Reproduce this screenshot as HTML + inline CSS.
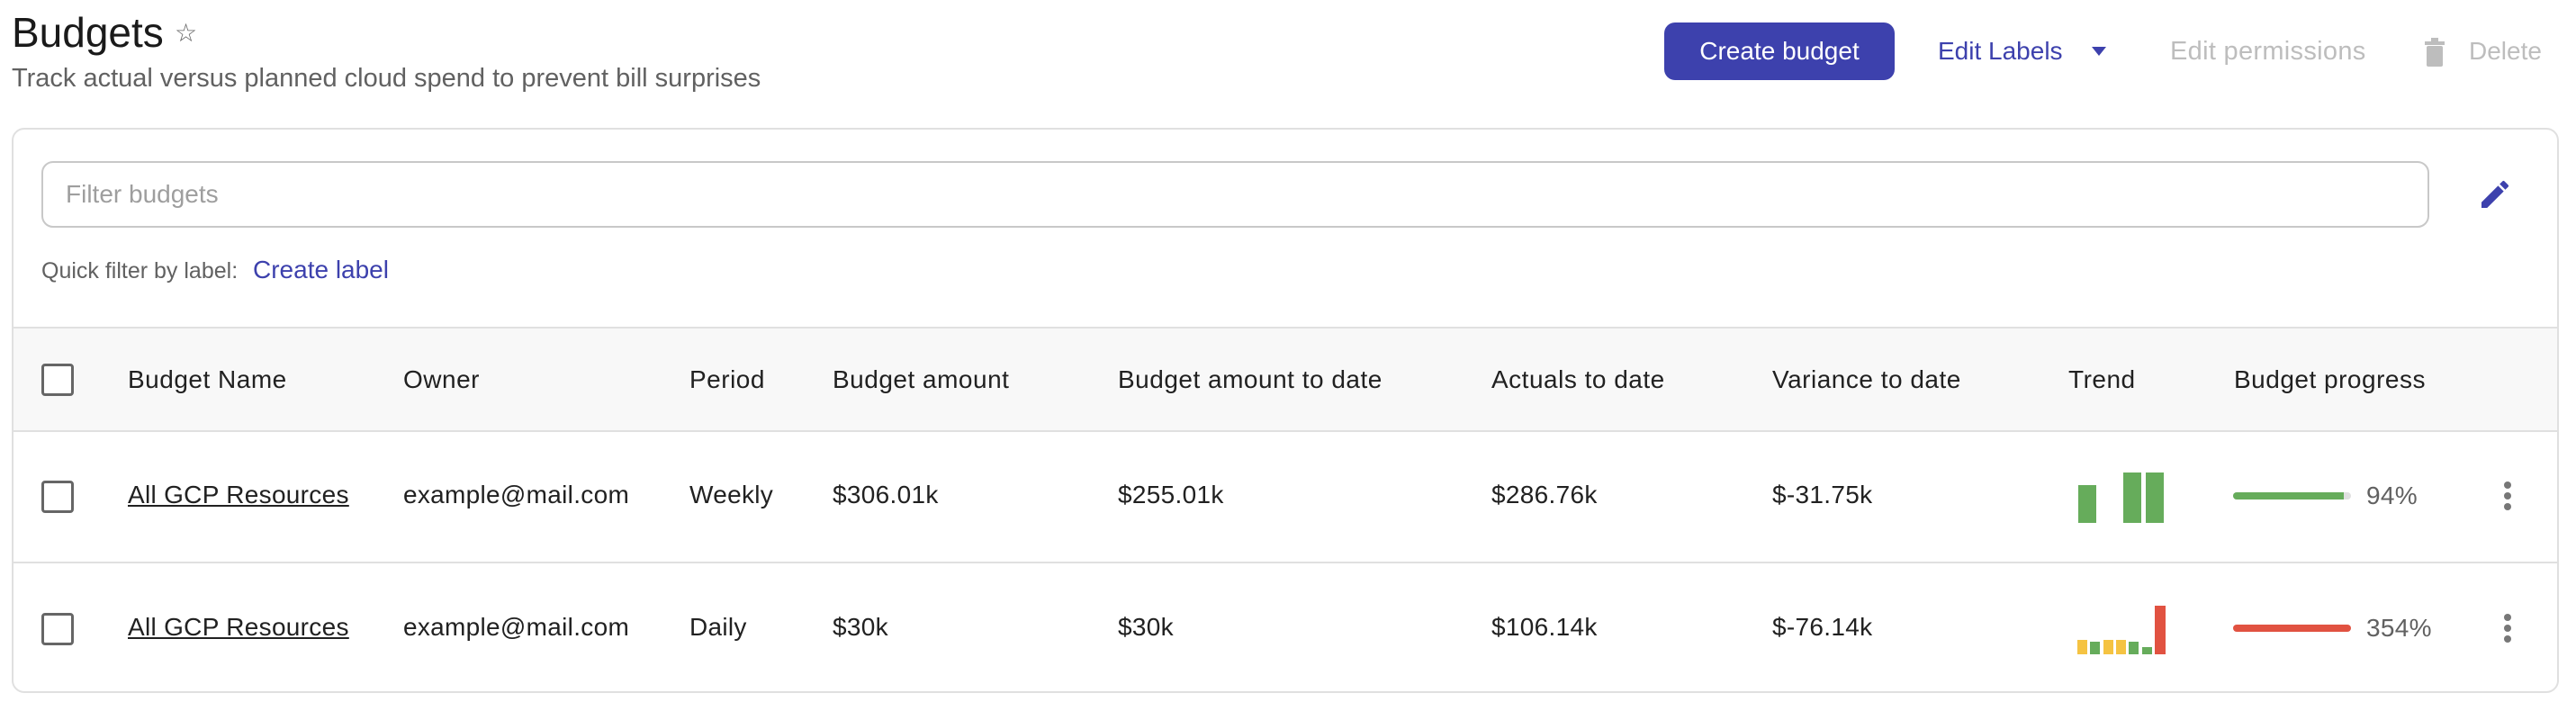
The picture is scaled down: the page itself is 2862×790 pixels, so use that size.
<!DOCTYPE html>
<html><head><meta charset="utf-8"><style>
*{margin:0;padding:0;box-sizing:border-box}
body{width:2862px;height:790px;background:#fff;font-family:"Liberation Sans",sans-serif;color:#212121;position:relative;overflow:hidden}
.a{position:absolute;white-space:nowrap}
.t{font-size:28px;line-height:32px;letter-spacing:0.3px}
.h{font-size:28px;line-height:32px;font-weight:500;color:#212121;letter-spacing:0.5px}
.cb{position:absolute;left:46px;width:36px;height:36px;border:3.5px solid #666;border-radius:4px;background:#fff}
.bar{position:absolute}
.g{background:#66ac5b}.y{background:#f5c342}.r{background:#e15241}
.dot{position:absolute;width:8px;height:8px;border-radius:50%;background:#777}
</style></head><body>
<div class="a" style="left:13px;top:9px;font-size:46px;line-height:54px;color:#1a1a1a">Budgets</div>
<div class="a" style="left:194px;top:20px;font-size:28px;color:#666">☆</div>
<div class="a" style="left:13px;top:70px;font-size:29px;line-height:34px;color:#616161">Track actual versus planned cloud spend to prevent bill surprises</div>

<div class="a" style="left:1849px;top:25px;width:256px;height:64px;background:#3d41ad;border-radius:12px;color:#fff;font-size:28px;line-height:64px;text-align:center;font-weight:500">Create budget</div>
<div class="a" style="left:2153px;top:40px;font-size:28px;line-height:34px;color:#3d41ad;font-weight:500">Edit Labels</div>
<svg class="a" style="left:2324px;top:52px" width="16" height="12"><path d="M0 0H16L8 10Z" fill="#3d41ad"/></svg>
<div class="a" style="left:2411px;top:40px;font-size:29px;line-height:34px;color:#bdbdbd;font-weight:500;letter-spacing:0.3px">Edit permissions</div>
<svg class="a" style="left:2694px;top:42px" width="22" height="32"><rect x="0" y="4" width="22" height="4" fill="#bdbdbd"/><rect x="7" y="0" width="8" height="5" fill="#bdbdbd"/><rect x="2" y="9" width="18" height="23" rx="2" fill="#bdbdbd"/></svg>
<div class="a" style="left:2743px;top:40px;font-size:28px;line-height:34px;color:#bdbdbd;font-weight:500">Delete</div>

<div class="a" style="left:13px;top:142px;width:2830px;height:628px;border:2px solid #e0e0e0;border-radius:14px;overflow:hidden">
  <div class="a" style="left:0;top:219px;width:2830px;height:117px;background:#f8f8f8;border-top:2px solid #e0e0e0;border-bottom:2px solid #e0e0e0"></div>
  <div class="a" style="left:0;top:480px;width:2830px;height:2px;background:#e0e0e0"></div>
</div>
<div class="a" style="left:46px;top:179px;width:2653px;height:74px;border:2px solid #c8c8c8;border-radius:13px"></div>
<div class="a" style="left:73px;top:200px;font-size:28px;line-height:32px;color:#9e9e9e">Filter budgets</div>
<svg class="a" style="left:2752px;top:196px" width="40" height="40" viewBox="0 0 24 24"><path d="M3 17.25V21h3.75L17.81 9.94l-3.75-3.75L3 17.25zM20.71 7.04a1 1 0 000-1.41l-2.34-2.34a1 1 0 00-1.41 0l-1.83 1.83 3.75 3.75 1.83-1.83z" fill="#3d41ad"/></svg>
<div class="a" style="left:46px;top:286px;font-size:25px;line-height:30px;color:#616161">Quick filter by label:</div>
<div class="a" style="left:281px;top:284px;font-size:28px;line-height:32px;color:#3d41ad;font-weight:500">Create label</div>

<div class="cb" style="top:404px"></div>
<div class="a h" style="left:142px;top:406px">Budget Name</div>
<div class="a h" style="left:448px;top:406px">Owner</div>
<div class="a h" style="left:766px;top:406px">Period</div>
<div class="a h" style="left:925px;top:406px">Budget amount</div>
<div class="a h" style="left:1242px;top:406px">Budget amount to date</div>
<div class="a h" style="left:1657px;top:406px">Actuals to date</div>
<div class="a h" style="left:1969px;top:406px">Variance to date</div>
<div class="a h" style="left:2298px;top:406px">Trend</div>
<div class="a h" style="left:2482px;top:406px">Budget progress</div>

<div class="cb" style="top:534px"></div>
<div class="a t" style="left:142px;top:534px;text-decoration:underline">All GCP Resources</div>
<div class="a t" style="left:448px;top:534px">example@mail.com</div>
<div class="a t" style="left:766px;top:534px">Weekly</div>
<div class="a t" style="left:925px;top:534px">$306.01k</div>
<div class="a t" style="left:1242px;top:534px">$255.01k</div>
<div class="a t" style="left:1657px;top:534px">$286.76k</div>
<div class="a t" style="left:1969px;top:534px">$-31.75k</div>
<div class="bar g" style="left:2309px;top:539px;width:20px;height:42px"></div>
<div class="bar g" style="left:2359px;top:525px;width:20px;height:56px"></div>
<div class="bar g" style="left:2384px;top:525px;width:20px;height:56px"></div>
<div class="a" style="left:2481px;top:547px;width:131px;height:8px;border-radius:4px;background:#e0e0e0"></div>
<div class="a" style="left:2481px;top:547px;width:123px;height:8px;border-radius:4px 0 0 4px;background:#66ac5b"></div>
<div class="a t" style="left:2629px;top:535px;color:#616161">94%</div>
<div class="dot" style="left:2782px;top:535px"></div><div class="dot" style="left:2782px;top:547px"></div><div class="dot" style="left:2782px;top:559px"></div>

<div class="cb" style="top:681px"></div>
<div class="a t" style="left:142px;top:681px;text-decoration:underline">All GCP Resources</div>
<div class="a t" style="left:448px;top:681px">example@mail.com</div>
<div class="a t" style="left:766px;top:681px">Daily</div>
<div class="a t" style="left:925px;top:681px">$30k</div>
<div class="a t" style="left:1242px;top:681px">$30k</div>
<div class="a t" style="left:1657px;top:681px">$106.14k</div>
<div class="a t" style="left:1969px;top:681px">$-76.14k</div>
<div class="bar y" style="left:2308px;top:711px;width:11px;height:16px"></div>
<div class="bar g" style="left:2322px;top:713px;width:11px;height:14px"></div>
<div class="bar y" style="left:2337px;top:711px;width:11px;height:16px"></div>
<div class="bar y" style="left:2351px;top:711px;width:11px;height:16px"></div>
<div class="bar g" style="left:2365px;top:713px;width:11px;height:14px"></div>
<div class="bar g" style="left:2380px;top:719px;width:11px;height:8px"></div>
<div class="bar r" style="left:2394px;top:673px;width:12px;height:54px"></div>
<div class="a" style="left:2481px;top:694px;width:131px;height:8px;border-radius:4px;background:#e15241"></div>
<div class="a t" style="left:2629px;top:682px;color:#616161">354%</div>
<div class="dot" style="left:2782px;top:682px"></div><div class="dot" style="left:2782px;top:694px"></div><div class="dot" style="left:2782px;top:706px"></div>
</body></html>
